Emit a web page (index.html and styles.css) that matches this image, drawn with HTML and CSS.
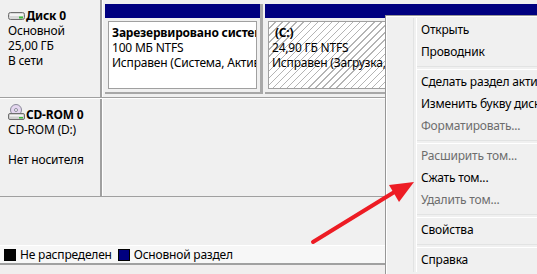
FILE: index.html
```html
<!DOCTYPE html>
<html lang="ru">
<head>
    <meta charset="UTF-8">
    <title>Управление дисками</title>
    <link rel="stylesheet" href="styles.css">
</head>
<body>
    <div class="screen">
        <div class="disk disk-main">
            <div class="disk-info">
                <div class="disk-name">
                    <svg class="icon" width="17" height="10" viewBox="0 0 17 10">
                        <rect x="0.5" y="1.5" width="16" height="7" rx="2" fill="#d8d8d8" stroke="#6f6f6f"/>
                        <rect x="2" y="3" width="13" height="2" fill="#f4f4f4"/>
                        <rect x="11" y="5.5" width="4" height="2" fill="#3cb93c"/>
                    </svg>
                    <b>Диск 0</b>
                </div>
                <div>Основной</div>
                <div>25,00 ГБ</div>
                <div>В сети</div>
            </div>
            <div class="disk-map">
                <div class="part part-system">
                    <div class="bar"></div>
                    <div class="part-body">
                        <div class="box">
                            <b>Зарезервировано систем</b>
                            <div>100 МБ NTFS</div>
                            <div>Исправен (Система, Актив</div>
                        </div>
                    </div>
                </div>
                <div class="part part-c">
                    <div class="bar"></div>
                    <div class="part-body">
                        <div class="box hatched">
                            <b>&nbsp;(C:)</b>
                            <div>24,90 ГБ NTFS</div>
                            <div>Исправен (Загрузка,</div>
                        </div>
                    </div>
                </div>
            </div>
        </div>

        <div class="disk disk-cd">
            <div class="disk-info">
                <div class="disk-name">
                    <svg class="icon" width="17" height="17" viewBox="0 0 17 17">
                        <circle cx="8" cy="6" r="5.5" fill="#e4d6ef" stroke="#8a8a9a"/>
                        <circle cx="8" cy="6" r="1.5" fill="#fff" stroke="#8a8a9a"/>
                        <rect x="0.5" y="9.5" width="16" height="6" rx="1.5" fill="#cfcfcf" stroke="#6f6f6f"/>
                        <rect x="2" y="11" width="13" height="1.5" fill="#f4f4f4"/>
                        <rect x="11" y="13" width="4" height="1.5" fill="#3cb93c"/>
                    </svg>
                    <b>CD-ROM 0</b>
                </div>
                <div>CD-ROM (D:)</div>
                <div>&nbsp;</div>
                <div>Нет носителя</div>
            </div>
            <div class="disk-map empty"></div>
        </div>

        <div class="spacer"></div>

        <div class="legend">
            <span class="swatch swatch-free"></span>
            <span>Не распределен</span>
            <span class="swatch swatch-primary"></span>
            <span>Основной раздел</span>
        </div>
        <div class="status"></div>

        <ul class="menu">
            <li>Открыть</li>
            <li>Проводник</li>
            <li class="sep"></li>
            <li>Сделать раздел актив</li>
            <li>Изменить букву диск</li>
            <li class="off">Форматировать...</li>
            <li class="sep"></li>
            <li class="off">Расширить том...</li>
            <li>Сжать том...</li>
            <li class="off">Удалить том...</li>
            <li class="sep"></li>
            <li>Свойства</li>
            <li class="sep"></li>
            <li>Справка</li>
        </ul>

        <svg class="arrow" width="537" height="274" viewBox="0 0 537 274">
            <line x1="313" y1="242" x2="396" y2="191" stroke="#ed1c24" stroke-width="4" stroke-linecap="round"/>
            <polygon points="414,182 389,185 399,202" fill="#ed1c24"/>
        </svg>
    </div>
</body>
</html>
```

FILE: styles.css
```css
* {
    box-sizing: border-box;
}
body {
    margin: 0;
    font-family: 'Noto Sans', 'Open Sans', sans-serif;
    font-size: 12px;
    line-height: 15px;
    letter-spacing: -0.2px;
    color: #000;
    background-color: #f0f0f0;
}
b {
    font-weight: bold;
}
.screen {
    position: relative;
    width: 537px;
    height: 274px;
    overflow: hidden;
    display: flex;
    flex-direction: column;
}
.disk {
    display: flex;
    border-bottom: 1px solid #a0a0a0;
}
.disk-main {
    height: 98px;
}
.disk-cd {
    height: 99px;
    border-top: 1px solid #fff;
}
.disk-info {
    width: 102px;
    flex-shrink: 0;
    padding: 8px 0 0 8px;
    border-right: 2px solid #a0a0a0;
    white-space: nowrap;
}
.disk-name {
    display: flex;
    align-items: flex-end;
}
.icon {
    margin: 0 1px 2px 0;
}
.disk-cd .icon {
    margin-bottom: 1px;
}
.disk-cd .disk-info {
    padding-top: 5px;
}
.disk-map {
    flex: 1;
    display: flex;
    padding: 4px 0 3px 2px;
    border-left: 1px solid #fff;
    min-width: 0;
}
.part {
    display: flex;
    flex-direction: column;
    min-width: 0;
}
.part-system {
    width: 158px;
    margin-right: 2px;
    border-right: 3px solid #a8a8a8;
}
.part-c {
    flex: 1;
}
.bar {
    height: 14px;
    background-color: #000080;
    flex-shrink: 0;
}
.part-body {
    flex: 1;
    padding: 3px;
    border-bottom: 2px solid #a8a8a8;
}
.box {
    height: 100%;
    background-color: #fff;
    border: 1px solid #a0a0a0;
    padding: 3px 0 0 3px;
    white-space: nowrap;
    overflow: hidden;
}
.box b,
.box div {
    display: block;
}
.hatched {
    background: repeating-linear-gradient(135deg, #fff 0 4px, #b4b4b4 4px 5px);
}
.spacer {
    flex: 1;
}
.legend {
    height: 20px;
    display: flex;
    align-items: center;
    gap: 4px;
    padding-left: 4px;
    background-color: #f7f7f7;
    border-top: 1px solid #fff;
    border-bottom: 2px solid #a0a0a0;
}
.swatch {
    width: 12px;
    height: 12px;
    border: 1px solid #000;
}
.swatch-free {
    background-color: #000;
}
.swatch-primary {
    background-color: #000080;
    margin-left: 2px;
}
.status {
    height: 9px;
    background-color: #f0eeee;
}
.menu {
    position: absolute;
    left: 385px;
    top: 15px;
    width: 170px;
    margin: 0;
    padding: 3px 2px;
    list-style: none;
    background-color: #f0f0f0;
    border: 1px solid #979797;
    box-shadow: inset 1px 1px 0 #fff;
}
.menu::before {
    content: "";
    position: absolute;
    top: 2px;
    bottom: 2px;
    left: 27px;
    width: 2px;
    border-left: 1px solid #e2e3e3;
    border-right: 1px solid #fff;
}
.menu li {
    height: 22px;
    line-height: 22px;
    padding-left: 33px;
    white-space: nowrap;
}
.menu li.off {
    color: #6d6d6d;
}
.menu li.sep {
    height: 8px;
    margin-left: 29px;
    padding: 0;
    position: relative;
}
.menu li.sep::after {
    content: "";
    position: absolute;
    left: 0;
    right: 0;
    top: 3px;
    height: 2px;
    border-top: 1px solid #e2e3e3;
    border-bottom: 1px solid #fff;
}
.arrow {
    position: absolute;
    left: 0;
    top: 0;
    pointer-events: none;
}
```
